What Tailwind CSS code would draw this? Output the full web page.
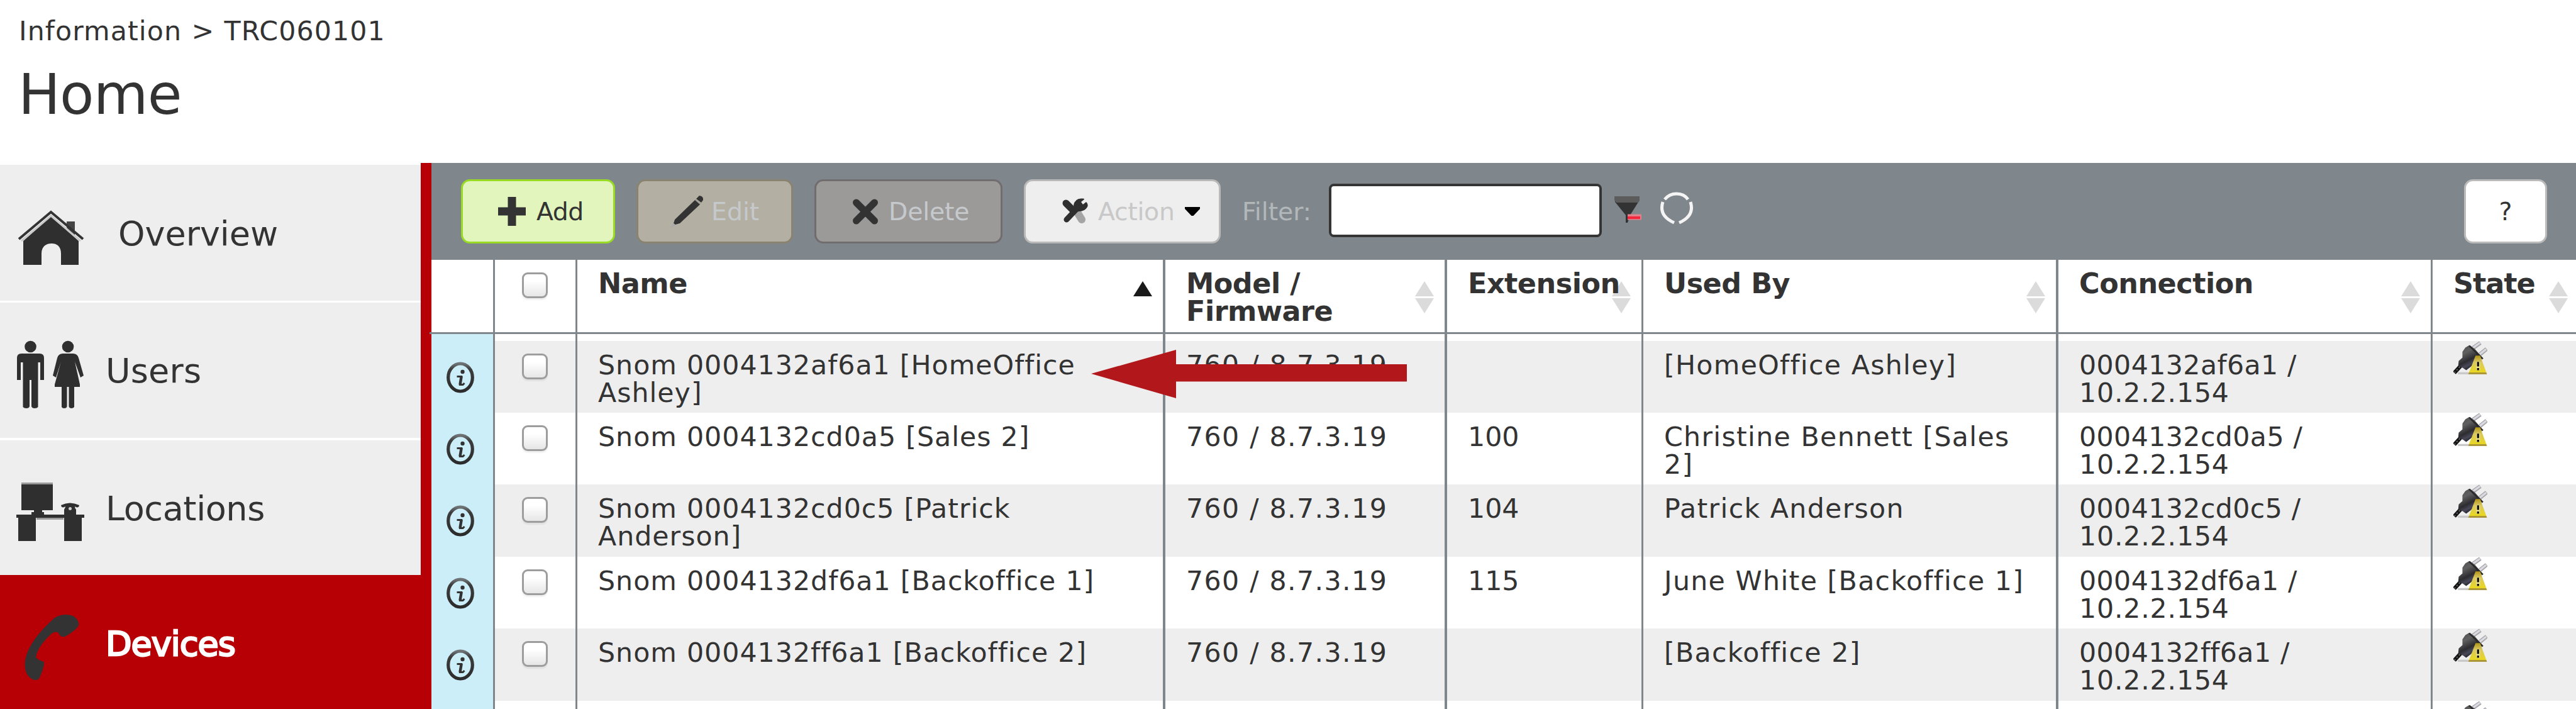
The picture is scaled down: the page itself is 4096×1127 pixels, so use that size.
<!DOCTYPE html>
<html lang="en">
<head>
<meta charset="utf-8">
<title>Devices</title>
<script src="https://cdn.jsdelivr.net/npm/@tailwindcss/browser@4"></script>
</head>
<body class="w-[4096px] h-[1127px] overflow-hidden bg-white text-[#333] font-['DejaVu_Sans',Verdana,sans-serif] [word-spacing:0.034em]">
<svg class="absolute w-0 h-0">
  <defs>
    <linearGradient id="warn" x1="0" y1="0" x2="0" y2="1"><stop offset="0" stop-color="#b09418"/><stop offset=".35" stop-color="#d9c860"/><stop offset=".9" stop-color="#ead820"/><stop offset=".91" stop-color="#ab9638"/></linearGradient>
    <linearGradient id="body" x1="0" y1="0" x2=".5" y2="1"><stop offset="0" stop-color="#4a4a4a"/><stop offset=".35" stop-color="#606060"/><stop offset=".65" stop-color="#2c2c30"/><stop offset=".8" stop-color="#484858"/><stop offset="1" stop-color="#15151a"/></linearGradient>
    <linearGradient id="rim" x1="0" y1="0" x2="0" y2="1"><stop offset="0" stop-color="#6f7477"/><stop offset=".2" stop-color="#3c3c3c"/><stop offset="1" stop-color="#2c2c2c"/></linearGradient>
    <symbol id="plug" viewBox="0 0 16 16">
      <path d="M2 15.5H8" stroke="#c9c9c9" stroke-width="1"/>
      <path d="M9 3.6L12.8.9M12.6 6.4L15.8 3.8" stroke="#a5a5a8" stroke-width="1.9"/>
      <path d="M9 3.5L12.6.9M12.6 6.3L15.6 3.9" stroke="#dadae2" stroke-width="1"/>
      <path d="M.3 15.3L3.5 11.8" stroke="#111" stroke-width="1.9"/>
      <path d="M.3 15.3L3.5 11.8" stroke="#555" stroke-width=".7" stroke-dasharray=".8 .8"/>
      <path d="M7.5 2L10 3.6L14 8.3L12 9L8 12.5L6 14L4.5 13L2.2 11.8L2.4 9.6L4.2 8L4.2 5.2L5.6 3.2Z" fill="url(#body)"/>
      <path d="M7.5 2.3L14 8.6" stroke="#2a2a2a" stroke-width=".8"/>
      <path d="M10.5 7H12.7L16 16H7Z" fill="url(#warn)"/>
      <path d="M11.7 10V14" stroke="#efe58e" stroke-width="1.8"/>
      <path d="M11.7 10V12.2M11.7 13V14" stroke="#111" stroke-width="1"/>
    </symbol>
    <symbol id="info" viewBox="0 0 48 56">
      <ellipse cx="24" cy="28" rx="19.3" ry="22" fill="none" stroke="url(#rim)" stroke-width="5.2"/>
      <circle cx="27.5" cy="19" r="3.2" fill="#333"/>
      <path d="M18.5 26.5H25.5L23.5 39.5H28L30.5 37" fill="none" stroke="#333" stroke-width="3"/>
      <path d="M25.700 26L23.5 39.5" stroke="#333" stroke-width="4.500"/>
    </symbol>
    <symbol id="sort" viewBox="0 0 30 51"><path d="M15 0L30 24H0ZM0 27H30L15 51Z" fill="#dbdbdb"/></symbol>
  </defs>
</svg>

<header class="h-[259px] pl-[29px] pt-6">
  <p class="text-[42.7px] leading-[50px] pl-[1px] tracking-[1.1px]">Information &gt; TRC060101</p>
  <h1 class="mt-[23px] text-[89px] leading-[106px] tracking-[-0.8px]">Home</h1>
</header>

<div class="flex h-[868px]">
  <nav class="w-[686px] shrink-0 border-r-[17px] border-[#b60005] pt-[3px] text-[54px] leading-[65px]">
    <ul class="flex flex-col">
      <li class="flex h-[219px] border-b-[3px] border-white bg-[#eee] bg-clip-padding">
        <svg class="ml-[28px] mt-[71px] w-[106px] h-[88px] shrink-0" viewBox="0 0 106 88">
          <path d="M78 19h13v24L78 29z" fill="#444"/>
          <path d="M53 11L97 50V88H69V70C69 58 62 54 54 54S38 58 38 70V88H9V50Z" fill="#2f2f2f"/>
          <path d="M2 47L53 4L104 47" fill="none" stroke="#333" stroke-width="4"/>
          <path d="M6 50L53 10L100 50" fill="none" stroke="#c9c9c9" stroke-width="3"/>
        </svg>
        <span class="ml-[54px] mt-[77px]">Overview</span>
      </li>
      <li class="flex h-[219px] border-b-[4px] border-white bg-[#eee] bg-clip-padding">
        <svg class="ml-[26px] mt-[60px] w-[108px] h-[108px] shrink-0" viewBox="0 0 108 108" fill="#2f2f2f">
          <circle cx="22.5" cy="10" r="9.3"/>
          <path d="M8 21H37Q44 21 44 28V63H38V35H34.500V106Q33 108 29 108Q25 108 24 105V63H21V105Q20 108 16 108Q12 108 10.500 106V35H7V63H1V28Q1 21 8 21Z"/>
          <circle cx="82" cy="10" r="9.3"/>
          <path d="M74 21H90Q97 21 99 28L107 56L102 59L93 34L101 70V74H92V106Q90 108 88 108Q84 108 83.500 105V74H80.500V105Q80 108 76 108Q73 108 72 106V74H61V70L71 34L63 59L58 56L65 28Q67 21 74 21Z"/>
        </svg>
        <span class="ml-[34px] mt-[76px] tracking-[0.2px]">Users</span>
      </li>
      <li class="flex h-[214px] bg-[#eee]">
        <svg class="ml-[26px] mt-[67px] w-[108px] h-[95px] shrink-0" viewBox="0 0 108 95" fill="#2f2f2f">
          <path d="M8 2H58V44H41V47H44V51H76V43Q78 40 78 38Q72 42 71 36Q85 29 100 36Q99 42 93 38Q93 41 95 43V51H108V56H104V93H76V56H31V93H3V56H0V51H24V47H28V44H8Z"/>
          <path d="M8 1.500H58" stroke="#999" stroke-width="3"/><path d="M32 57.500H75" stroke="#999" stroke-width="3"/>
          <circle cx="85.500" cy="41.500" r="2.500" fill="#ccc"/>
        </svg>
        <span class="ml-[34px] mt-[76px] tracking-[-0.4px]">Locations</span>
      </li>
      <li class="flex h-[214px] bg-[#b60005] text-white">
        <svg class="ml-[37px] mt-[62px] w-[90px] h-[106px] shrink-0" viewBox="0 0 90 106" fill="#333">
          <path d="M88 18Q83 27 66 36Q60 38 55 29Q49 27 43 33Q22 53 20 69Q25 74 33 76Q34 84 25 103Q20 107 13 103Q0 95 3 73Q9 42 50 6Q64-2 79 3Q89 9 88 18Z"/>
        </svg>
        <span class="ml-[41px] mt-[77px] tracking-[-1px] [-webkit-text-stroke:2.6px_white]">Devices</span>
      </li>
    </ul>
  </nav>

  <main class="flex-1 min-w-0">
    <div class="flex h-[154px] bg-[#80878c] pt-[26px] pl-[47px] pr-[46px] text-[39.4px] leading-[46px] text-[#c5c9cc]">
      <button class="flex w-[245px] h-[102px] border-[3px] border-[#97dc22] rounded-[14px] bg-[#e1f5bd] text-[#333]">
        <svg class="ml-[55px] mt-[24px] w-[46px] h-[48px] shrink-0" viewBox="0 0 46 48"><path d="M23 1V47M1 24H45" stroke="#333" stroke-width="13"/></svg>
        <span class="ml-[16px] mt-[25px] tracking-[-0.5px]">Add</span>
      </button>
      <button class="ml-[34px] flex w-[249px] h-[102px] border-[3px] border-[#8a8370] rounded-[14px] bg-[#b3afa2]">
        <svg class="ml-[52px] mt-[21px] w-[52px] h-[54px] shrink-0" viewBox="0 0 52 54"><path d="M3 49L6 40L38 9L46 16L14 46Z" fill="#333"/><path d="M40 7L45 2Q52 3 51 9L48 13Z" fill="#333"/><path d="M38.5 8L47 15" stroke="#999" stroke-width="1.5"/><path d="M0 53L3 45L8 49Z" fill="#aaa"/></svg>
        <span class="ml-[12px] mt-[25px]">Edit</span>
      </button>
      <button class="ml-[34px] flex w-[299px] h-[102px] border-[3px] border-[#716c6e] rounded-[14px] bg-[#9c9999]">
        <svg class="ml-[57px] mt-[28px] w-[42px] h-[41px] shrink-0" viewBox="0 0 42 41"><path d="M6.500 6L35.500 35M35.500 6L6.500 35" stroke="#333" stroke-width="11" stroke-linecap="round"/></svg>
        <span class="ml-[16px] mt-[25px] tracking-[-0.2px]">Delete</span>
      </button>
      <button class="ml-[34px] flex w-[313px] h-[102px] border-[3px] border-[#b9b9b9] rounded-[14px] bg-[#eee]">
        <svg class="ml-[58px] mt-[24px] w-[41px] h-[45px] shrink-0" viewBox="0 0 41 45">
          <path d="M23 24L31 37" stroke="#a5a5a5" stroke-width="12" stroke-linecap="round"/>
          <path d="M6 11L18 23" stroke="#2f2f2f" stroke-width="11" stroke-linecap="round"/>
          <path d="M7 37L24 19" stroke="#2f2f2f" stroke-width="9" stroke-linecap="round"/>
          <path d="M18 14Q20 4 30 3.5Q36 3 35 5L30 9L33 13L38 9Q42 12 40 17Q36 24 27 24L20 25Z" fill="#2f2f2f"/>
        </svg>
        <span class="ml-[16px] mt-[25px] tracking-[-0.3px] text-[#c8c8c8]">Action</span>
        <svg class="ml-auto mr-[30px] mt-[41px] w-[24px] h-[14px] shrink-0" viewBox="0 0 24 14"><path d="M0 0H24V3L13.5 14H10.5L0 3Z" fill="#000"/></svg>
      </button>
      <span class="ml-[34px] mt-[28px] w-[138px] text-[#b2b7ba]">Filter:</span>
      <div class="mt-[7px] w-[434px] h-[85px] border-4 border-[#353535] rounded-[8px] bg-white"></div>
      <svg class="ml-[20px] mt-[24px] w-[43px] h-[45px]" viewBox="0 0 43 45"><path d="M0 3H40V9L25 33L21 45H18V33L1 12Z" fill="#333"/><path d="M0 3H40V9L38 13H3L0 9Z" fill="#5c5c5c"/><path d="M21 36H43" stroke="#e0808a" stroke-width="9"/><path d="M21 37H41" stroke="#f5263c" stroke-width="4"/></svg>
      <svg class="ml-[29px] mt-[20px] w-[54px] h-[53px]" viewBox="0 0 54 53"><path d="M8 12Q15 3 27 3Q39 3 45 12M49 16Q56 38 31 49M23 49Q-2 38 5 16" fill="none" stroke="#f4f4f4" stroke-width="5"/></svg>
      <button class="ml-auto w-[132px] h-[102px] border-[3px] border-[#bbb] rounded-[14px] bg-white text-[#333]">?</button>
    </div>

    <div class="relative">
      <div id="head" class="-ml-[3px] flex h-[118px] border-b-[3px] border-[#80878c] pl-[3px] text-[44.5px] leading-[44px] font-bold tracking-[-0.5px]"></div>
      <div id="rows" class="h-[596px] overflow-hidden"></div>
      <svg class="absolute left-[1049px] top-[143px] w-[502px] h-[77px]" viewBox="0 0 502 77"><path d="M0 38L135 0V23H502V50.5H135V77Z" fill="#b2181b"/></svg>
    </div>
  </main>
</div>

<script>
const sort = '<svg class="absolute right-[17px] top-[34px] w-[30px] h-[51px]"><use href="#sort"/></svg>';
const sortLast = '<svg class="absolute right-[13px] top-[34px] w-[30px] h-[51px]"><use href="#sort"/></svg>';
const asc = '<svg class="absolute right-[17px] top-[34px] w-[30px] h-[24px]" viewBox="0 0 30 24"><path d="M15 0L30 24H0Z" fill="#1a1a1a"/></svg>';
const box = '<span class="ml-[43px] mt-[20px] block w-[41px] h-[41px] rounded-[9px] border-[3px] border-[#9d9d9d] bg-linear-to-b from-white from-30% to-[#e6e6e6] shadow-[0_3px_2px_rgba(0,0,0,0.06)]"></span>';
const col = {
  info: 'w-[101px] border-r-[3px]',
  check: 'w-[131px] border-r-[3px]',
  name: 'w-[935px] border-r-4 pl-[33px]',
  model: 'w-[448px] border-r-4 pl-[33px]',
  ext: 'w-[312px] border-r-[3px] pl-[33px]',
  used: 'w-[660px] border-r-4 pl-[33px]',
  conn: 'w-[595px] border-r-[3px] pl-[33px]',
  state: 'w-[228px] pl-[33px]'
};
const cell = (k, inner, cls = '') => `<div class="relative shrink-0 border-[#80878c] whitespace-nowrap ${col[k]} ${cls}">${inner}</div>`;
const lines = (a) => a.map(t => `<span class="block w-fit">${t}</span>`).join('');

document.getElementById('head').innerHTML =
  cell('info', '') + cell('check', box) +
  cell('name', asc + 'Name', 'pt-[16px]') +
  cell('model', sort + lines(['Model /', 'Firmware']), 'pt-[16px]') +
  cell('ext', sort + '<span class="relative">Extension</span>', 'pt-[16px]') +
  cell('used', sort + 'Used By', 'pt-[16px]') +
  cell('conn', sort + 'Connection', 'pt-[16px]') +
  cell('state', sortLast + 'State', 'pt-[16px] tracking-[-1px]');

const data = [
  [['Snom 0004132af6a1 [HomeOffice', 'Ashley]'], '760 / 8.7.3.19', '', ['[HomeOffice Ashley]'], '0004132af6a1 /'],
  [['Snom 0004132cd0a5 [Sales 2]'], '760 / 8.7.3.19', '100', ['Christine Bennett [Sales', '2]'], '0004132cd0a5 /'],
  [['Snom 0004132cd0c5 [Patrick', 'Anderson]'], '760 / 8.7.3.19', '104', ['Patrick Anderson'], '0004132cd0c5 /'],
  [['Snom 0004132df6a1 [Backoffice 1]'], '760 / 8.7.3.19', '115', ['June White [Backoffice 1]'], '0004132df6a1 /'],
  [['Snom 0004132ff6a1 [Backoffice 2]'], '760 / 8.7.3.19', '', ['[Backoffice 2]'], '0004132ff6a1 /']
];
const row = (d, i) => `<div class="flex h-[114.4px] text-[42.7px] leading-[44px] ${i % 2 ? 'bg-white' : 'bg-[#eee]'}">` +
  cell('info', d ? '<svg class="ml-[22px] mt-[30px] w-[48px] h-[56px]"><use href="#info"/></svg>' : '', 'bg-[#cbeef9]') +
  cell('check', d ? box : '') +
  cell('name', d ? lines(d[0]) : '', 'pt-[16px] tracking-[1px]') +
  cell('model', d ? lines([d[1]]) : '', 'pt-[16px] tracking-[1.4px]') +
  cell('ext', d ? lines([d[2]]) : '', 'pt-[16px]') +
  cell('used', d ? lines(d[3]) : '', 'pt-[16px] tracking-[1.3px]') +
  cell('conn', d ? lines([d[4], '<span class="tracking-[0.8px]">10.2.2.154</span>']) : '', 'pt-[16px] tracking-[0.4px]') +
  cell('state', '<svg class="w-[54px] h-[53px]"><use href="#plug"/></svg>') + '</div>';
const gap = '<div class="flex h-[10.6px]">' + cell('info', '', 'bg-[#cbeef9]') + ['check', 'name', 'model', 'ext', 'used', 'conn', 'state'].map(k => cell(k, '')).join('') + '</div>';
document.getElementById('rows').innerHTML = gap + [...data, null].map(row).join('');
</script>
</body>
</html>
